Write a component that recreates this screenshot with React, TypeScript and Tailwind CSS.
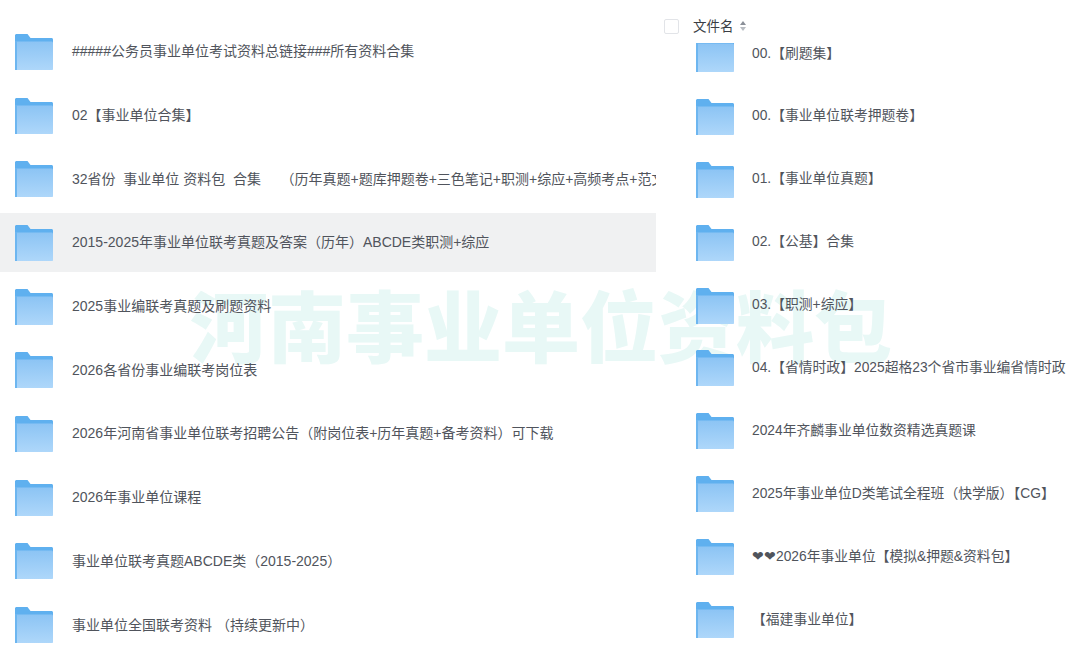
const leftRows = [
  "#####公务员事业单位考试资料总链接###所有资料合集",
  "02【事业单位合集】",
  "32省份  事业单位 资料包  合集     （历年真题+题库押题卷+三色笔记+职测+综应+高频考点+范文）",
  "2015-2025年事业单位联考真题及答案（历年）ABCDE类职测+综应",
  "2025事业编联考真题及刷题资料",
  "2026各省份事业编联考岗位表",
  "2026年河南省事业单位联考招聘公告（附岗位表+历年真题+备考资料）可下载",
  "2026年事业单位课程",
  "事业单位联考真题ABCDE类（2015-2025）",
  "事业单位全国联考资料 （持续更新中）",
];

const rightRows = [
  "00.【刷题集】",
  "00.【事业单位联考押题卷】",
  "01.【事业单位真题】",
  "02.【公基】合集",
  "03.【职测+综应】",
  "04.【省情时政】2025超格23个省市事业编省情时政",
  "2024年齐麟事业单位数资精选真题课",
  "2025年事业单位D类笔试全程班（快学版）【CG】",
  "❤❤2026年事业单位【模拟&押题&资料包】",
  "【福建事业单位】",
];

function FolderIcon({ id }: { id: string }) {
  return (
    <svg width="38" height="36" viewBox="0 0 38 36" className="shrink-0">
      <defs>
        <linearGradient id={id} x1="0" y1="0" x2="0" y2="1">
          <stop offset="0" stopColor="#8cc4f4" />
          <stop offset="1" stopColor="#aed7fa" />
        </linearGradient>
      </defs>
      <path d="M0 1.5C0 .7.7 0 1.5 0H12.5L15.5 4H36.5C37.4 4 38 4.6 38 5.5V12H0Z" fill="#5fb0ef" />
      <path d="M0 7.5H36.5C37.4 7.5 38 8.2 38 9V35C38 35.6 37.6 36 37 36H1C.4 36 0 35.6 0 35Z" fill={`url(#${id})`} />
      <rect x="0" y="7" width="2" height="29" fill="#6db6f0" />
    </svg>
  );
}

export default function App() {
  return (
    <div className="relative h-[653px] w-[1080px] overflow-hidden bg-white font-['Liberation_Sans','Noto_Sans_CJK_SC',sans-serif] text-[14px] text-[#50545c]">
      <div className="pointer-events-none absolute left-[190px] top-[285px] text-[78px] font-black leading-[90px] whitespace-nowrap text-[#e8f8f6]">
        河南事业单位资料包
      </div>

      <div className="relative flex">
        <div className="flex w-[656px] flex-col pt-[20px]">
          {leftRows.map((text, i) => (
            <div key={i} className="flex h-[63.7px] shrink-0 items-center">
              <div
                className={`flex h-[59px] w-full items-center gap-[19px] overflow-hidden pl-[15px] ${i === 3 ? "bg-[#f0f1f2]" : ""}`}
              >
                <FolderIcon id={`left-${i}`} />
                <span className="whitespace-pre">{text}</span>
              </div>
            </div>
          ))}
        </div>

        <div className="flex flex-1 flex-col">
          <div className="relative z-10 flex h-[43px] items-start bg-white pl-[8px] pt-[17px] text-[13.5px] text-[#3a3d44]">
            <span className="mt-[2px] h-[15px] w-[15px] rounded-[2px] border border-[#e2e4e8] bg-white" />
            <span className="ml-[14px] leading-[19px]">文件名</span>
            <svg width="8" height="12" viewBox="0 0 8 12" className="ml-[5px] mt-[3px]">
              <path d="M4 1L7 5H1Z" fill="#8a8f98" />
              <path d="M4 11L1 7H7Z" fill="#b8bcc2" />
            </svg>
          </div>
          <div className="-mt-[20.5px] flex flex-col text-[13.8px]">
            {rightRows.map((text, i) => (
              <div key={i} className="flex h-[62.9px] shrink-0 items-center gap-[18px] pl-[40px]">
                <FolderIcon id={`right-${i}`} />
                <span className="whitespace-pre">{text}</span>
              </div>
            ))}
          </div>
        </div>
      </div>
    </div>
  );
}
